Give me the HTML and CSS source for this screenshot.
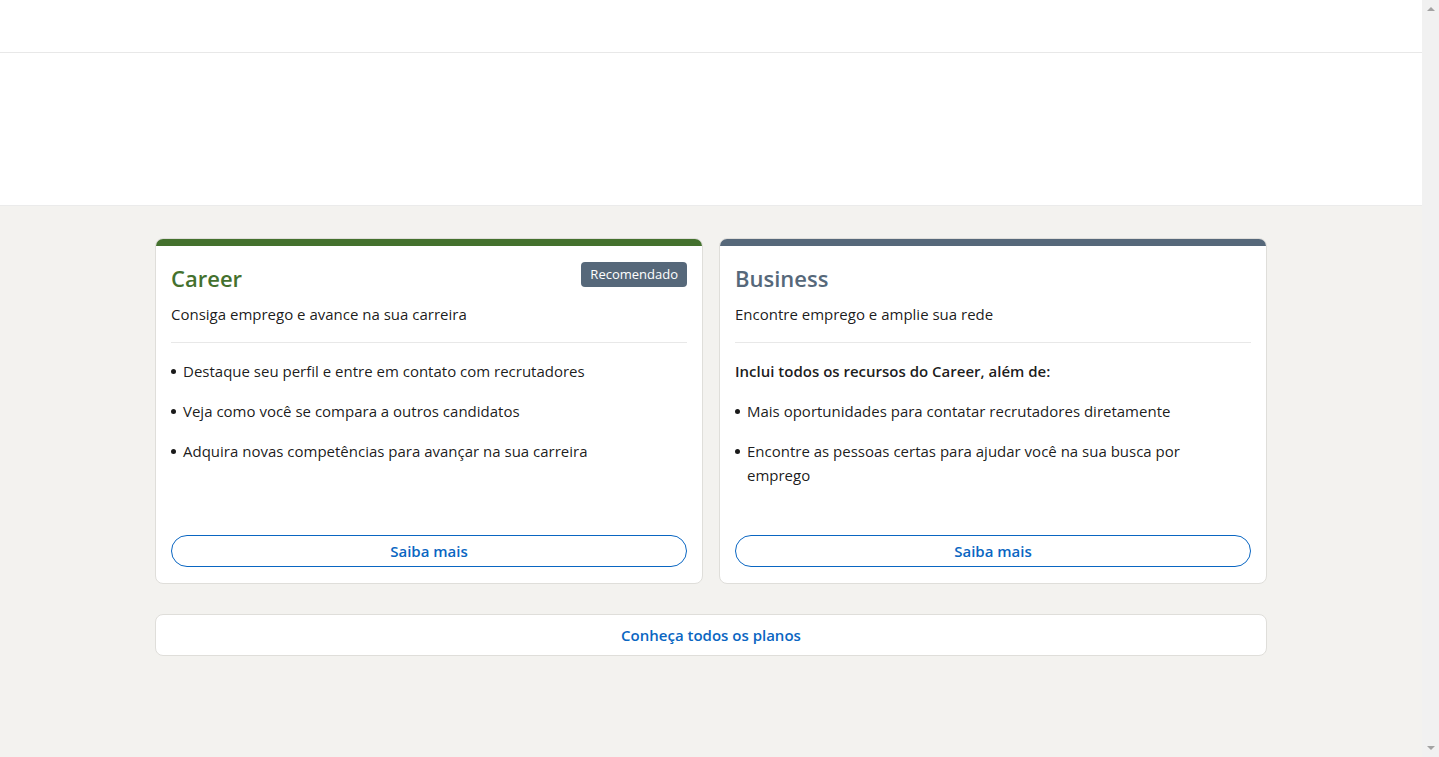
FILE: index.html
```html
<!DOCTYPE html>
<html lang="pt-BR">
<head>
<meta charset="utf-8">
<title>Planos</title>
<link rel="stylesheet" href="styles.css">
</head>
<body>
<div class="page">
  <header class="topbar"></header>
  <section class="hero"></section>
  <main class="plans">
    <div class="plan-grid">
      <article class="plan plan--career">
        <div class="plan__band"></div>
        <div class="plan__body">
          <div class="plan__head">
            <h2 class="plan__title">Career</h2>
            <span class="badge">Recomendado</span>
          </div>
          <p class="plan__sub">Consiga emprego e avance na sua carreira</p>
          <hr class="plan__divider">
          <ul class="features">
            <li>Destaque seu perfil e entre em contato com recrutadores</li>
            <li>Veja como você se compara a outros candidatos</li>
            <li>Adquira novas competências para avançar na sua carreira</li>
          </ul>
          <div class="plan__foot">
            <a class="btn-outline" href="#">Saiba mais</a>
          </div>
        </div>
      </article>
      <article class="plan plan--business">
        <div class="plan__band"></div>
        <div class="plan__body">
          <div class="plan__head">
            <h2 class="plan__title">Business</h2>
          </div>
          <p class="plan__sub">Encontre emprego e amplie sua rede</p>
          <hr class="plan__divider">
          <p class="features__intro">Inclui todos os recursos do Career, além de:</p>
          <ul class="features">
            <li>Mais oportunidades para contatar recrutadores diretamente</li>
            <li>Encontre as pessoas certas para ajudar você na sua busca por emprego</li>
          </ul>
          <div class="plan__foot">
            <a class="btn-outline" href="#">Saiba mais</a>
          </div>
        </div>
      </article>
    </div>
    <a class="all-plans" href="#">Conheça todos os planos</a>
  </main>
</div>
<div class="scrollbar" aria-hidden="true">
  <span class="scrollbar__arrow scrollbar__arrow--up"></span>
  <span class="scrollbar__arrow scrollbar__arrow--down"></span>
</div>
</body>
</html>
```
FILE: styles.css
```css
body {
  margin: 0;
  background: #f3f2ef;
  font-family: "Open Sans", "Noto Sans", sans-serif;
  font-size: 15px;
  color: rgba(0, 0, 0, 0.9);
  display: flex;
  min-height: 757px;
  overflow: hidden;
}
.page {
  flex: 1;
  min-width: 0;
}
.scrollbar {
  width: 17px;
  flex: none;
  background: #f1f1f1;
  display: flex;
  flex-direction: column;
  justify-content: space-between;
  align-items: center;
  padding: 7px 0;
  box-sizing: border-box;
  height: 757px;
}
.scrollbar__arrow {
  width: 0;
  height: 0;
  border-left: 4px solid transparent;
  border-right: 4px solid transparent;
}
.scrollbar__arrow--up {
  border-bottom: 4px solid #a3a3a3;
}
.scrollbar__arrow--down {
  border-top: 4px solid #a3a3a3;
}
.topbar {
  height: 52px;
  background: #fff;
  border-bottom: 1px solid #e8e8e8;
}
.hero {
  height: 152px;
  background: #fff;
  border-bottom: 1px solid #ebebeb;
}
.plans {
  width: 1112px;
  margin: 32px auto 0;
  display: flex;
  flex-direction: column;
  gap: 30px;
}
.plan-grid {
  display: grid;
  grid-template-columns: 1fr 1fr;
  gap: 16px;
}
.plan {
  background: #fff;
  border: 1px solid #dfdeda;
  border-radius: 8px;
  overflow: hidden;
  display: flex;
  flex-direction: column;
}
.plan__band {
  height: 8px;
  margin: -1px -1px 0;
}
.plan--career .plan__band { background: #44712e; }
.plan--business .plan__band { background: #56687a; }
.plan__body {
  padding: 16px 15px 16px;
  display: flex;
  flex-direction: column;
  flex: 1;
}
.plan__head {
  display: flex;
  justify-content: space-between;
  align-items: flex-start;
}
.plan__title {
  margin: 0;
  font-size: 22px;
  line-height: 32px;
  font-weight: 600;
}
.plan--career .plan__title { color: #44712e; }
.plan--business .plan__title { color: #56687a; }
.badge {
  background: #56687a;
  color: #fff;
  font-size: 13px;
  line-height: 25px;
  height: 25px;
  padding: 0 9px;
  border-radius: 4px;
}
.plan__sub {
  margin: 8px 0 0;
  line-height: 24px;
}
.plan__divider {
  margin: 16px 0 16px;
  border: 0;
  border-top: 1px solid #e8e8e8;
}
.features__intro {
  margin: 0 0 16px;
  line-height: 24px;
  font-weight: 600;
}
.features {
  list-style: none;
  margin: 0;
  padding: 0;
  display: flex;
  flex-direction: column;
  gap: 16px;
}
.features li {
  position: relative;
  padding: 0 40px 0 12px;
  line-height: 24px;
}
.features li::before {
  content: "";
  position: absolute;
  left: 0;
  top: 10px;
  width: 5px;
  height: 5px;
  border-radius: 50%;
  background: rgba(0, 0, 0, 0.9);
}
.plan__foot {
  margin-top: auto;
  padding-top: 48px;
}
.btn-outline {
  display: flex;
  align-items: center;
  justify-content: center;
  height: 30px;
  border: 1px solid #0a66c2;
  border-radius: 16px;
  color: #0a66c2;
  font-weight: 600;
  text-decoration: none;
}
.all-plans {
  display: flex;
  align-items: center;
  justify-content: center;
  height: 40px;
  background: #fff;
  border: 1px solid #dfdeda;
  border-radius: 8px;
  color: #0a66c2;
  font-weight: 600;
  text-decoration: none;
}
```
